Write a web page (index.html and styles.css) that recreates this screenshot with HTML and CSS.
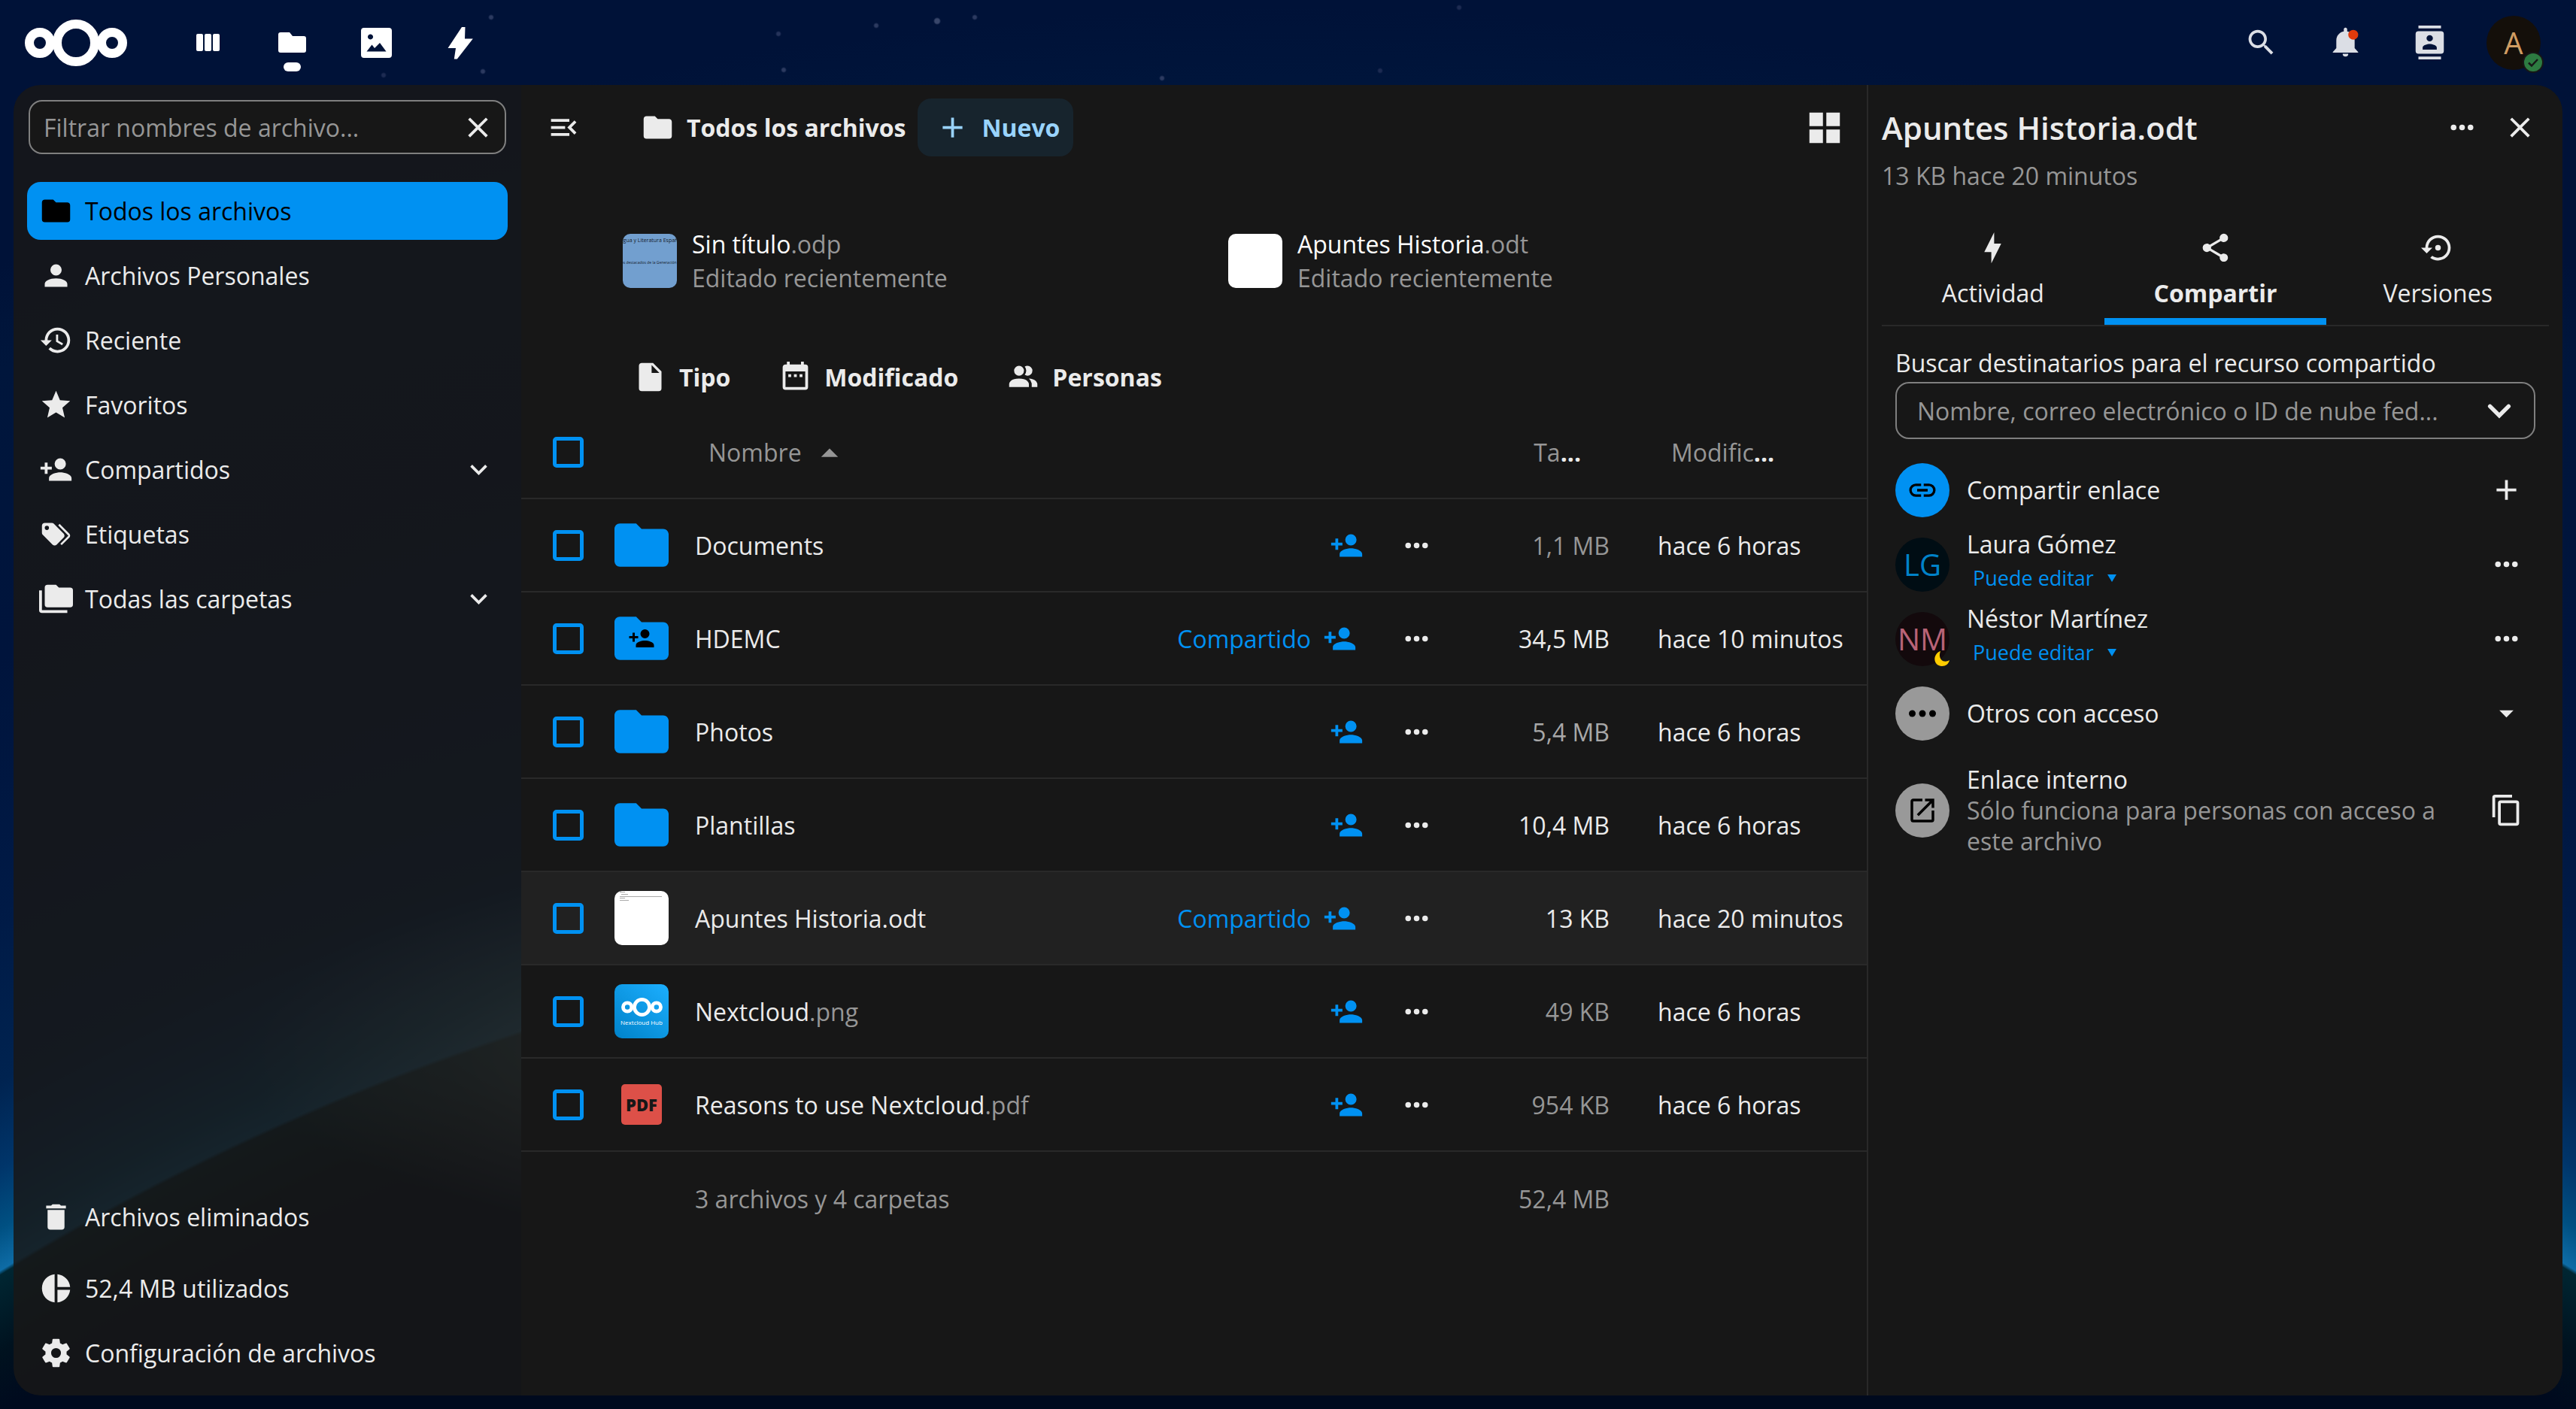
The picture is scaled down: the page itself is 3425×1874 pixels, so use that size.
FILE: index.html
```html
<!DOCTYPE html>
<html lang="es">
<head>
<meta charset="utf-8">
<title>Todos los archivos - Nextcloud</title>
<link rel="stylesheet" href="styles.css">
</head>
<body>
<svg class="sprite" aria-hidden="true">
  <symbol id="logo" viewBox="0 0 136 62"><g fill="none" stroke="currentColor"><circle cx="68" cy="31" r="25" stroke-width="12"/><circle cx="20" cy="31" r="14" stroke-width="12"/><circle cx="116" cy="31" r="14" stroke-width="12"/></g></symbol>
  <symbol id="dashboard" viewBox="0 0 45 45"><rect x="7" y="11" width="9" height="23" rx="2"/><rect x="18" y="11" width="9" height="23" rx="2"/><rect x="29" y="11" width="9" height="23" rx="2"/></symbol>
  <symbol id="files-app" viewBox="0 0 45 45"><path d="M7 9h12l4 5h15a3 3 0 0 1 3 3v16a3 3 0 0 1-3 3H7a3 3 0 0 1-3-3V12a3 3 0 0 1 3-3z"/></symbol>
  <symbol id="photos" viewBox="0 0 45 45"><path fill-rule="evenodd" d="M6 3h33a4 4 0 0 1 4 4v32a4 4 0 0 1-4 4H6a4 4 0 0 1-4-4V7a4 4 0 0 1 4-4zm8.500 8.500a3.500 3.500 0 1 0 .010 0zM9.500 34.500h26L27 23l-7 7-3.500-4.500z"/></symbol>
  <symbol id="bolt-app" viewBox="0 0 45 45"><path d="M24 2h4.500L28 17.500h10.800L17.800 44.500h-4L16 30H5.500z"/></symbol>
  <symbol id="folder" viewBox="0 0 24 24"><path d="M10,4H4C2.890,4 2,4.890 2,6V18A2,2 0 0,0 4,20H20A2,2 0 0,0 22,18V8C22,6.890 21.100,6 20,6H12L10,4Z"/></symbol>
  <symbol id="account" viewBox="0 0 24 24"><path d="M12,4A4,4 0 0,1 16,8A4,4 0 0,1 12,12A4,4 0 0,1 8,8A4,4 0 0,1 12,4M12,14C16.420,14 20,15.790 20,18V20H4V18C4,15.790 7.580,14 12,14Z"/></symbol>
  <symbol id="history" viewBox="0 0 24 24"><path d="M13.500,8H12V13L16.280,15.540L17,14.330L13.500,12.250V8M13,3A9,9 0 0,0 4,12H1L4.960,16.030L9,12H6A7,7 0 0,1 13,5A7,7 0 0,1 20,12A7,7 0 0,1 13,19C11.070,19 9.320,18.210 8.060,16.940L6.640,18.360C8.270,20 10.500,21 13,21A9,9 0 0,0 22,12A9,9 0 0,0 13,3"/></symbol>
  <symbol id="star" viewBox="0 0 24 24"><path d="M12,17.270L18.180,21L16.540,13.970L22,9.240L14.810,8.620L12,2L9.190,8.620L2,9.240L7.450,13.970L5.820,21L12,17.270Z"/></symbol>
  <symbol id="account-plus" viewBox="0 0 24 24"><path d="M15,14C12.330,14 7,15.330 7,18V20H23V18C23,15.330 17.670,14 15,14M6,10V7H4V10H1V12H4V15H6V12H9V10M15,12A4,4 0 0,0 19,8A4,4 0 0,0 15,4A4,4 0 0,0 11,8A4,4 0 0,0 15,12Z"/></symbol>
  <symbol id="tags" viewBox="0 0 24 24"><path d="M5.500,9A1.500,1.500 0 0,0 7,7.500A1.500,1.500 0 0,0 5.500,6A1.500,1.500 0 0,0 4,7.500A1.500,1.500 0 0,0 5.500,9M17.410,11.580C17.770,11.940 18,12.440 18,13C18,13.550 17.780,14.050 17.410,14.410L12.410,19.410C12.050,19.770 11.550,20 11,20C10.450,20 9.950,19.780 9.580,19.410L2.590,12.420C2.220,12.050 2,11.550 2,11V6C2,4.890 2.890,4 4,4H9C9.550,4 10.050,4.220 10.410,4.580L17.410,11.580M13.540,5.710L14.540,4.710L21.410,11.580C21.780,11.940 22,12.450 22,13C22,13.550 21.780,14.050 21.420,14.410L16.040,19.790L15.040,18.790L20.750,13L13.540,5.710Z"/></symbol>
  <symbol id="folders" viewBox="0 0 24 24"><path d="M22,4H14L12,2H6A2,2 0 0,0 4,4V16A2,2 0 0,0 6,18H22A2,2 0 0,0 24,16V6A2,2 0 0,0 22,4M2,6H0V11H0V20A2,2 0 0,0 2,22H20V20H2V6Z"/></symbol>
  <symbol id="trash" viewBox="0 0 24 24"><path d="M19,4H15.500L14.500,3H9.500L8.500,4H5V6H19M6,19A2,2 0 0,0 8,21H16A2,2 0 0,0 18,19V7H6V19Z"/></symbol>
  <symbol id="pie" viewBox="0 0 24 24"><path d="M11,2V22C5.900,21.500 2,17.200 2,12C2,6.800 5.900,2.500 11,2M13,2V11H22C21.500,6.200 17.800,2.500 13,2M13,13V22C17.700,21.500 21.500,17.800 22,13H13Z"/></symbol>
  <symbol id="cog" viewBox="0 0 24 24"><path d="M12,15.500A3.500,3.500 0 0,1 8.500,12A3.500,3.500 0 0,1 12,8.500A3.500,3.500 0 0,1 15.500,12A3.500,3.500 0 0,1 12,15.500M19.430,12.970C19.470,12.650 19.500,12.330 19.500,12C19.500,11.670 19.470,11.340 19.430,11L21.540,9.370C21.730,9.220 21.780,8.950 21.660,8.730L19.660,5.270C19.540,5.050 19.270,4.960 19.050,5.050L16.560,6.050C16.040,5.660 15.500,5.320 14.870,5.070L14.500,2.420C14.460,2.180 14.250,2 14,2H10C9.750,2 9.540,2.180 9.500,2.420L9.130,5.070C8.500,5.320 7.960,5.660 7.440,6.050L4.950,5.050C4.730,4.960 4.460,5.050 4.340,5.270L2.340,8.730C2.210,8.950 2.270,9.220 2.460,9.370L4.570,11C4.530,11.340 4.500,11.670 4.500,12C4.500,12.330 4.530,12.650 4.570,12.970L2.460,14.630C2.270,14.780 2.210,15.050 2.340,15.270L4.340,18.730C4.460,18.950 4.730,19.030 4.950,18.950L7.440,17.940C7.960,18.340 8.500,18.680 9.130,18.930L9.500,21.580C9.540,21.820 9.750,22 10,22H14C14.250,22 14.460,21.820 14.500,21.580L14.870,18.930C15.500,18.670 16.040,18.340 16.560,17.940L19.050,18.950C19.270,19.030 19.540,18.950 19.660,18.730L21.660,15.270C21.780,15.050 21.730,14.780 21.540,14.630L19.430,12.970Z"/></symbol>
  <symbol id="chevron" viewBox="0 0 24 24"><path d="M7.410,8.580L12,13.170L16.590,8.580L18,10L12,16L6,10L7.410,8.580Z"/></symbol>
  <symbol id="chevron-bold" viewBox="0 0 24 24"><path d="M6.500 9.500l5.500 5.500 5.500-5.500" fill="none" stroke="currentColor" stroke-width="2.400" stroke-linecap="round"/></symbol>
  <symbol id="close" viewBox="0 0 24 24"><path d="M19,6.410L17.590,5L12,10.590L6.410,5L5,6.410L10.590,12L5,17.590L6.410,19L12,13.410L17.590,19L19,17.590L13.410,12L19,6.410Z"/></symbol>
  <symbol id="menu-open" viewBox="0 0 24 24"><path d="M21,15.610L19.590,17L14.580,12L19.590,7L21,8.390L17.440,12L21,15.610M3,6H16V8H3V6M3,13V11H13V13H3M3,18V16H16V18H3Z"/></symbol>
  <symbol id="plus" viewBox="0 0 24 24"><path d="M19,13H13V19H11V13H5V11H11V5H13V11H19V13Z"/></symbol>
  <symbol id="grid" viewBox="0 0 24 24"><path d="M3,11H11V3H3M3,21H11V13H3M13,21H21V13H13M13,3V11H21V3"/></symbol>
  <symbol id="file" viewBox="0 0 24 24"><path d="M13,9V3.500L18.500,9M6,2C4.890,2 4,2.890 4,4V20A2,2 0 0,0 6,22H18A2,2 0 0,0 20,20V8L14,2H6Z"/></symbol>
  <symbol id="calendar" viewBox="0 0 24 24"><path d="M9,10H7V12H9V10M13,10H11V12H13V10M17,10H15V12H17V10M19,3H18V1H16V3H8V1H6V3H5C3.890,3 3,3.900 3,5V19A2,2 0 0,0 5,21H19A2,2 0 0,0 21,19V5A2,2 0 0,0 19,3M19,19H5V8H19V19Z"/></symbol>
  <symbol id="people" viewBox="0 0 24 24"><path d="M16 17V19H2V17S2 13 9 13 16 17 16 17M12.500 7.500A3.500 3.500 0 1 0 9 11A3.500 3.500 0 0 0 12.500 7.500M15.940 13A5.320 5.320 0 0 1 18 17V19H22V17S22 13.370 15.940 13M15 4A3.390 3.390 0 0 0 13.070 4.590A5 5 0 0 1 13.070 10.410A3.390 3.390 0 0 0 15 11A3.500 3.500 0 0 0 15 4Z"/></symbol>
  <symbol id="dots" viewBox="0 0 24 24"><circle cx="6" cy="12" r="2"/><circle cx="12" cy="12" r="2"/><circle cx="18" cy="12" r="2"/></symbol>
  <symbol id="search" viewBox="0 0 24 24"><path d="M9.500,3A6.500,6.500 0 0,1 16,9.500C16,11.110 15.410,12.590 14.440,13.730L14.710,14H15.500L20.500,19L19,20.500L14,15.500V14.710L13.730,14.440C12.590,15.410 11.110,16 9.500,16A6.500,6.500 0 0,1 3,9.500A6.500,6.500 0 0,1 9.500,3M9.500,5C7,5 5,7 5,9.500C5,12 7,14 9.500,14C12,14 14,12 14,9.500C14,7 12,5 9.500,5Z"/></symbol>
  <symbol id="bell" viewBox="0 0 24 24"><mask id="bell-cut"><rect width="24" height="24" fill="#fff"/><circle cx="17.500" cy="6.500" r="5" fill="#000"/></mask><path mask="url(#bell-cut)" d="M14,20A2,2 0 0,1 10,20H14M12,1.500A1.200,1.200 0 0,1 13.200,3V4.080C16,4.560 18.500,7.030 18.500,10.500V16L21,18.800V19.200H3V18.800L5.500,16V10.500C5.500,7.030 8,4.560 10.800,4.080V3A1.200,1.200 0 0,1 12,1.500Z"/><circle cx="17.500" cy="6.500" r="3.500" fill="#df3a0c"/></symbol>
  <symbol id="contacts" viewBox="0 0 24 24"><path d="M20,0H4V2H20V0M4,24H20V22H4V24M20,4H4A2,2 0 0,0 2,6V18A2,2 0 0,0 4,20H20A2,2 0 0,0 22,18V6A2,2 0 0,0 20,4M12,6.750A2.250,2.250 0 0,1 14.250,9A2.250,2.250 0 0,1 12,11.250A2.250,2.250 0 0,1 9.750,9A2.250,2.250 0 0,1 12,6.750M17,17H7V15.500C7,13.830 10.330,13 12,13C13.670,13 17,13.830 17,15.500V17Z"/></symbol>
  <symbol id="bolt" viewBox="0 0 24 24"><path d="M11 15H6L13 1V9H18L11 23V15Z"/></symbol>
  <symbol id="share" viewBox="0 0 24 24"><path d="M18,16.080C17.240,16.080 16.560,16.380 16.040,16.850L8.910,12.700C8.960,12.470 9,12.240 9,12C9,11.760 8.960,11.530 8.910,11.300L15.960,7.190C16.500,7.690 17.210,8 18,8A3,3 0 0,0 21,5A3,3 0 0,0 18,2A3,3 0 0,0 15,5C15,5.240 15.040,5.470 15.090,5.700L8.040,9.810C7.500,9.310 6.790,9 6,9A3,3 0 0,0 3,12A3,3 0 0,0 6,15C6.790,15 7.500,14.690 8.040,14.190L15.160,18.340C15.110,18.550 15.080,18.770 15.080,19C15.080,20.610 16.390,21.910 18,21.910C19.610,21.910 20.920,20.610 20.920,19A2.920,2.920 0 0,0 18,16.080Z"/></symbol>
  <symbol id="restore" viewBox="0 0 24 24"><path d="M12,3A9,9 0 0,0 3,12H0L4,16L8,12H5A7,7 0 0,1 12,5A7,7 0 0,1 19,12A7,7 0 0,1 12,19C10.500,19 9.090,18.500 7.940,17.700L6.500,19.140C8.040,20.300 9.940,21 12,21A9,9 0 0,0 21,12A9,9 0 0,0 12,3M14,12A2,2 0 0,0 12,10A2,2 0 0,0 10,12A2,2 0 0,0 12,14A2,2 0 0,0 14,12Z"/></symbol>
  <symbol id="link" viewBox="0 0 24 24"><path d="M3.900,12C3.900,10.290 5.290,8.900 7,8.900H11V7H7A5,5 0 0,0 2,12A5,5 0 0,0 7,17H11V15.100H7C5.290,15.100 3.900,13.710 3.900,12M8,13H16V11H8V13M17,7H13V8.900H17C18.710,8.900 20.100,10.290 20.100,12C20.100,13.710 18.710,15.100 17,15.100H13V17H17A5,5 0 0,0 22,12A5,5 0 0,0 17,7Z"/></symbol>
  <symbol id="open" viewBox="0 0 24 24"><path d="M14,3V5H17.590L7.760,14.830L9.170,16.240L19,6.410V10H21V3M19,19H5V5H12V3H5C3.890,3 3,3.900 3,5V19A2,2 0 0,0 5,21H19A2,2 0 0,0 21,19V12H19V19Z"/></symbol>
  <symbol id="copy" viewBox="0 0 24 24"><path d="M19,21H8V7H19M19,5H8A2,2 0 0,0 6,7V21A2,2 0 0,0 8,23H19A2,2 0 0,0 21,21V7A2,2 0 0,0 19,5M16,1H4A2,2 0 0,0 2,3V17H4V3H16V1Z"/></symbol>
  <symbol id="menu-down" viewBox="0 0 24 24"><path d="M7,10L12,15L17,10H7Z"/></symbol>
  <symbol id="menu-up" viewBox="0 0 24 24"><path d="M7,15L12,10L17,15H7Z"/></symbol>
  <symbol id="triangle" viewBox="0 0 12 12"><path d="M0 1h12L6 11z"/></symbol>
</svg>

<header class="topbar">
  <a class="logo" href="#" aria-label="Nextcloud"><svg><use href="#logo"/></svg></a>
  <nav class="apps" aria-label="Aplicaciones">
    <a href="#" aria-label="Panel"><svg class="icon"><use href="#dashboard"/></svg></a>
    <a href="#" class="current" aria-label="Archivos"><svg class="icon"><use href="#files-app"/></svg></a>
    <a href="#" aria-label="Fotos"><svg class="icon"><use href="#photos"/></svg></a>
    <a href="#" aria-label="Actividad"><svg class="icon"><use href="#bolt-app"/></svg></a>
  </nav>
  <div class="tools">
    <button type="button" aria-label="Buscar"><svg class="icon"><use href="#search"/></svg></button>
    <button type="button" aria-label="Notificaciones"><svg class="icon"><use href="#bell"/></svg></button>
    <button type="button" aria-label="Contactos"><svg class="icon"><use href="#contacts"/></svg></button>
    <button type="button" aria-label="Ajustes de usuario"><span class="avatar avatar-a">A<svg class="status" viewBox="0 0 28 28"><circle cx="14" cy="14" r="14" fill="#171717"/><circle cx="14" cy="14" r="12" fill="#2d7b41"/><path d="M8 14.500l4 4 8-8.500" fill="none" stroke="#171717" stroke-width="2.500"/></svg></span></button>
  </div>
</header>

<div class="panel">
  <nav class="nav" aria-label="Archivos">
    <div class="filter">
      <input type="text" aria-label="Filtrar nombres de archivo" placeholder="Filtrar nombres de archivo...">
      <button type="button" aria-label="Borrar filtro"><svg class="icon"><use href="#close"/></svg></button>
    </div>
    <ul class="nav-list">
      <li class="nav-item active"><a href="#"><svg class="icon"><use href="#folder"/></svg>Todos los archivos</a></li>
      <li class="nav-item"><a href="#"><svg class="icon"><use href="#account"/></svg>Archivos Personales</a></li>
      <li class="nav-item"><a href="#"><svg class="icon"><use href="#history"/></svg>Reciente</a></li>
      <li class="nav-item"><a href="#"><svg class="icon"><use href="#star"/></svg>Favoritos</a></li>
      <li class="nav-item"><a href="#"><svg class="icon"><use href="#account-plus"/></svg>Compartidos</a><button type="button" aria-label="Abrir compartidos"><svg class="icon"><use href="#chevron"/></svg></button></li>
      <li class="nav-item"><a href="#"><svg class="icon"><use href="#tags"/></svg>Etiquetas</a></li>
      <li class="nav-item"><a href="#"><svg class="icon"><use href="#folders"/></svg>Todas las carpetas</a><button type="button" aria-label="Abrir carpetas"><svg class="icon"><use href="#chevron"/></svg></button></li>
    </ul>
    <ul class="nav-list nav-footer">
      <li class="nav-item trash"><a href="#"><svg class="icon"><use href="#trash"/></svg>Archivos eliminados</a></li>
      <li class="nav-item"><a href="#"><svg class="icon"><use href="#pie"/></svg>52,4 MB utilizados</a></li>
      <li class="nav-item"><a href="#"><svg class="icon"><use href="#cog"/></svg>Configuración de archivos</a></li>
    </ul>
  </nav>

  <main class="content">
    <div class="toolbar">
      <button type="button" class="square" aria-label="Cerrar navegación"><svg class="icon"><use href="#menu-open"/></svg></button>
      <a href="#" class="crumb"><svg class="icon"><use href="#folder"/></svg>Todos los archivos</a>
      <button type="button" class="new"><svg class="icon"><use href="#plus"/></svg>Nuevo</button>
      <button type="button" class="square view" aria-label="Vista de cuadrícula"><svg class="icon-lg"><use href="#grid"/></svg></button>
    </div>

    <div class="recent">
      <a href="#" class="recent-item">
        <span class="thumb thumb-odp"><span class="slide-title">Lengua y Literatura Española</span><span class="slide-sub">Autores destacados de la Generación del 27</span></span>
        <span class="recent-text"><span class="name">Sin título<span class="muted">.odp</span></span><span class="muted">Editado recientemente</span></span>
      </a>
      <a href="#" class="recent-item">
        <span class="thumb thumb-blank"></span>
        <span class="recent-text"><span class="name">Apuntes Historia<span class="muted">.odt</span></span><span class="muted">Editado recientemente</span></span>
      </a>
    </div>

    <div class="filters">
      <button type="button"><svg class="icon"><use href="#file"/></svg>Tipo</button>
      <button type="button"><svg class="icon"><use href="#calendar"/></svg>Modificado</button>
      <button type="button"><svg class="icon"><use href="#people"/></svg>Personas</button>
    </div>

    <table class="files">
      <colgroup><col class="c-check"><col class="c-icon"><col><col class="c-actions"><col class="c-size"><col class="c-date"></colgroup>
      <thead>
        <tr>
          <th><input type="checkbox" aria-label="Seleccionar todo"></th>
          <th></th>
          <th class="sort"><button type="button">Nombre<svg class="icon-lg"><use href="#menu-up"/></svg></button></th>
          <th></th>
          <th class="size"><button type="button">Ta<b>...</b></button></th>
          <th class="date"><button type="button">Modific<b>...</b></button></th>
        </tr>
      </thead>
      <tbody>
        <tr>
          <td><input type="checkbox" aria-label="Documents"></td>
          <td><svg class="folder" viewBox="2 4 20 16"><use href="#folder" width="24" height="24"/></svg></td>
          <td><a href="#">Documents</a></td>
          <td><div class="actions"><button type="button" class="share" aria-label="Compartir"><svg class="icon"><use href="#account-plus"/></svg></button><button type="button" class="square" aria-label="Acciones"><svg class="icon"><use href="#dots"/></svg></button></div></td>
          <td class="size muted">1,1 MB</td>
          <td>hace 6 horas</td>
        </tr>
        <tr>
          <td><input type="checkbox" aria-label="HDEMC"></td>
          <td><svg class="folder" viewBox="2 4 20 16"><use href="#folder" width="24" height="24"/><use class="folder-mark" href="#account-plus" x="7" y="7" width="10" height="10"/></svg></td>
          <td><a href="#">HDEMC</a></td>
          <td><div class="actions"><button type="button" class="share shared">Compartido<svg class="icon"><use href="#account-plus"/></svg></button><button type="button" class="square" aria-label="Acciones"><svg class="icon"><use href="#dots"/></svg></button></div></td>
          <td class="size">34,5 MB</td>
          <td>hace 10 minutos</td>
        </tr>
        <tr>
          <td><input type="checkbox" aria-label="Photos"></td>
          <td><svg class="folder" viewBox="2 4 20 16"><use href="#folder" width="24" height="24"/></svg></td>
          <td><a href="#">Photos</a></td>
          <td><div class="actions"><button type="button" class="share" aria-label="Compartir"><svg class="icon"><use href="#account-plus"/></svg></button><button type="button" class="square" aria-label="Acciones"><svg class="icon"><use href="#dots"/></svg></button></div></td>
          <td class="size mid">5,4 MB</td>
          <td>hace 6 horas</td>
        </tr>
        <tr>
          <td><input type="checkbox" aria-label="Plantillas"></td>
          <td><svg class="folder" viewBox="2 4 20 16"><use href="#folder" width="24" height="24"/></svg></td>
          <td><a href="#">Plantillas</a></td>
          <td><div class="actions"><button type="button" class="share" aria-label="Compartir"><svg class="icon"><use href="#account-plus"/></svg></button><button type="button" class="square" aria-label="Acciones"><svg class="icon"><use href="#dots"/></svg></button></div></td>
          <td class="size">10,4 MB</td>
          <td>hace 6 horas</td>
        </tr>
        <tr class="selected">
          <td><input type="checkbox" aria-label="Apuntes Historia.odt"></td>
          <td><svg class="thumb" viewBox="0 0 72 72"><rect width="72" height="72" fill="#fff"/><g fill="#aaa"><rect x="7" y="1" width="7" height="1"/><rect x="9" y="4" width="9" height="1"/><rect x="7" y="7" width="56" height="1"/><rect x="7" y="9" width="7" height="1"/><rect x="7" y="12" width="12" height="1"/></g></svg></td>
          <td><a href="#">Apuntes Historia.odt</a></td>
          <td><div class="actions"><button type="button" class="share shared">Compartido<svg class="icon"><use href="#account-plus"/></svg></button><button type="button" class="square" aria-label="Acciones"><svg class="icon"><use href="#dots"/></svg></button></div></td>
          <td class="size">13 KB</td>
          <td>hace 20 minutos</td>
        </tr>
        <tr>
          <td><input type="checkbox" aria-label="Nextcloud.png"></td>
          <td><span class="thumb thumb-png"><svg><use href="#logo"/></svg>Nextcloud Hub</span></td>
          <td><a href="#">Nextcloud<span class="muted">.png</span></a></td>
          <td><div class="actions"><button type="button" class="share" aria-label="Compartir"><svg class="icon"><use href="#account-plus"/></svg></button><button type="button" class="square" aria-label="Acciones"><svg class="icon"><use href="#dots"/></svg></button></div></td>
          <td class="size muted">49 KB</td>
          <td>hace 6 horas</td>
        </tr>
        <tr>
          <td><input type="checkbox" aria-label="Reasons to use Nextcloud.pdf"></td>
          <td><span class="pdf">PDF</span></td>
          <td><a href="#">Reasons to use Nextcloud<span class="muted">.pdf</span></a></td>
          <td><div class="actions"><button type="button" class="share" aria-label="Compartir"><svg class="icon"><use href="#account-plus"/></svg></button><button type="button" class="square" aria-label="Acciones"><svg class="icon"><use href="#dots"/></svg></button></div></td>
          <td class="size muted">954 KB</td>
          <td>hace 6 horas</td>
        </tr>
      </tbody>
      <tfoot>
        <tr><td></td><td></td><td class="muted">3 archivos y 4 carpetas</td><td></td><td class="size muted">52,4 MB</td><td></td></tr>
      </tfoot>
    </table>
  </main>

  <aside class="sidebar">
    <div class="side-head">
      <h2>Apuntes Historia.odt</h2>
      <button type="button" class="square" aria-label="Acciones"><svg class="icon"><use href="#dots"/></svg></button>
      <button type="button" class="square" aria-label="Cerrar"><svg class="icon"><use href="#close"/></svg></button>
    </div>
    <p class="side-sub muted">13 KB hace 20 minutos</p>
    <div class="tabs" role="tablist">
      <button type="button" role="tab"><svg class="icon"><use href="#bolt"/></svg>Actividad</button>
      <button type="button" role="tab" aria-selected="true" class="current"><svg class="icon"><use href="#share"/></svg>Compartir</button>
      <button type="button" role="tab"><svg class="icon"><use href="#restore"/></svg>Versiones</button>
    </div>
    <div class="sharing">
      <label for="recipients">Buscar destinatarios para el recurso compartido</label>
      <div class="combo">
        <input id="recipients" type="text" placeholder="Nombre, correo electrónico o ID de nube fed...">
        <button type="button" aria-label="Abrir lista"><svg class="icon-lg"><use href="#chevron-bold"/></svg></button>
      </div>
      <ul class="shares">
        <li>
          <span class="avatar avatar-link"><svg class="icon-md"><use href="#link"/></svg></span>
          <span class="entry">Compartir enlace</span>
          <button type="button" class="square" aria-label="Crear enlace"><svg class="icon"><use href="#plus"/></svg></button>
        </li>
        <li>
          <span class="avatar avatar-lg">LG</span>
          <span class="entry">Laura Gómez<button type="button" class="perm">Puede editar<svg><use href="#triangle"/></svg></button></span>
          <button type="button" class="square" aria-label="Acciones"><svg class="icon"><use href="#dots"/></svg></button>
        </li>
        <li>
          <span class="avatar avatar-nm">NM<svg class="moon" viewBox="0 0 20 20"><path fill="#fc0" d="M8 0C-3 4-2 20 10 20C15 20 19 17 20 12C12 17 4 10 8 0z"/></svg></span>
          <span class="entry">Néstor Martínez<button type="button" class="perm">Puede editar<svg><use href="#triangle"/></svg></button></span>
          <button type="button" class="square" aria-label="Acciones"><svg class="icon"><use href="#dots"/></svg></button>
        </li>
        <li>
          <span class="avatar avatar-grey"><svg class="icon-lg"><use href="#dots"/></svg></span>
          <span class="entry">Otros con acceso</span>
          <button type="button" class="square" aria-label="Mostrar otros"><svg class="icon"><use href="#menu-down"/></svg></button>
        </li>
        <li class="internal">
          <span class="avatar avatar-grey"><svg class="icon-md"><use href="#open"/></svg></span>
          <span class="entry">Enlace interno<span class="muted">Sólo funciona para personas con acceso a este archivo</span></span>
          <button type="button" class="square" aria-label="Copiar enlace"><svg class="icon"><use href="#copy"/></svg></button>
        </li>
      </ul>
    </div>
  </aside>
</div>
</body>
</html>
```
FILE: styles.css
```css
:root {
  --text: #ebebeb;
  --muted: #969696;
  --primary: #0091f2;
  --main: #171717;
  --line: #292929;
}

* {
  box-sizing: border-box;
}

body {
  margin: 0;
  min-height: 100vh;
  display: flex;
  flex-direction: column;
  padding: 0 18px 18px;
  color: var(--text);
  font: 32px/45px "Open Sans", "Noto Sans", sans-serif;
  background:
    radial-gradient(circle at 1246px 28px, #38466a 3px, transparent 5px),
    radial-gradient(circle at 1296px 23px, #2c3a60 2px, transparent 4px),
    radial-gradient(circle at 1165px 34px, #2c3a60 2px, transparent 4px),
    radial-gradient(circle at 1035px 45px, #25335a 2px, transparent 4px),
    radial-gradient(circle at 1042px 93px, #2c3a60 2px, transparent 4px),
    radial-gradient(circle at 1545px 104px, #2c3a60 2px, transparent 4px),
    radial-gradient(circle at 1835px 94px, #1d2b52 2px, transparent 4px),
    radial-gradient(circle at 1940px 10px, #1d2b52 2px, transparent 4px),
    radial-gradient(circle at 653px 23px, #2c3a60 2px, transparent 4px),
    radial-gradient(circle at 642px 95px, #2c3a60 2px, transparent 4px),
    radial-gradient(circle at 510px 100px, #1d2b52 2px, transparent 4px),
    radial-gradient(1400px 320px at 50% 1400px, rgba(190, 215, 205, 0.6) 60%, rgba(190, 215, 205, 0.25) 80%, transparent),
    radial-gradient(circle at 50% 4490px, #000a1e 3120px, #00121f 3190px, #002632 3277px, #0e6ca6 3282px, #005082 3330px, #00356a 3400px, #002350 3500px, #001a46 3700px, #00143c 4000px, #00163c 4350px, #001238 4480px);
}

.sprite {
  display: none;
}

svg {
  display: block;
  flex: none;
  fill: currentColor;
}

a {
  color: inherit;
  text-decoration: none;
}

ul {
  list-style: none;
  margin: 0;
  padding: 0;
}

button {
  display: flex;
  align-items: center;
  margin: 0;
  padding: 0;
  border: 0;
  background: none;
  color: inherit;
  font: inherit;
}

input {
  margin: 0;
  font: inherit;
  color: inherit;
}

input::placeholder {
  color: var(--muted);
  opacity: 1;
}

.icon {
  width: 45px;
  height: 45px;
}

.icon-md {
  width: 42px;
  height: 42px;
}

.icon-lg {
  width: 54px;
  height: 54px;
}

.muted {
  color: var(--muted);
}

.square {
  flex: none;
  width: 77px;
  height: 77px;
  justify-content: center;
}

/* Top bar */
.topbar {
  display: flex;
  align-items: center;
  height: 113px;
  padding: 0 9px 0 15px;
  color: #fff;
}

.logo svg {
  width: 136px;
  height: 62px;
}

.apps {
  display: flex;
  margin-left: 51px;
}

.apps a {
  position: relative;
  display: flex;
  align-items: center;
  justify-content: center;
  width: 112px;
  height: 112px;
}

.apps .current::after {
  content: "";
  position: absolute;
  bottom: 18px;
  width: 23px;
  height: 12px;
  border-radius: 6px;
  background: #fff;
}

.tools {
  display: flex;
  margin-left: auto;
}

.tools button {
  justify-content: center;
  width: 112px;
  height: 112px;
  color: #dbdee5;
}

.avatar {
  position: relative;
  flex: none;
  display: flex;
  align-items: center;
  justify-content: center;
  width: 72px;
  height: 72px;
  border-radius: 50%;
  font-size: 40px;
}

.avatar-a {
  background: #140f0a;
  color: #d09c62;
}

.status {
  position: absolute;
  right: -4px;
  bottom: -4px;
  width: 28px;
  height: 28px;
}

/* Panel */
.panel {
  flex: 1;
  display: flex;
  overflow: hidden;
  border-radius: 36px;
}

/* Navigation */
.nav {
  flex: none;
  display: flex;
  flex-direction: column;
  width: 675px;
  padding: 20px 18px 18px;
  background: rgba(23, 23, 23, 0.86);
}

.filter {
  display: flex;
  align-items: center;
  height: 72px;
  margin: 0 2px 37px;
  border: 2px solid #7f7f7f;
  border-radius: 18px;
  background: var(--main);
}

.filter input {
  flex: 1;
  min-width: 0;
  padding: 0 0 0 18px;
  border: 0;
  background: none;
}

.filter button {
  justify-content: center;
  width: 72px;
}

.nav-list {
  display: flex;
  flex-direction: column;
  gap: 9px;
}

.nav-item {
  display: flex;
  height: 77px;
  border-radius: 18px;
}

.nav-item a {
  flex: 1;
  display: flex;
  align-items: center;
  gap: 16px;
  padding-left: 16px;
}

.nav-item button {
  justify-content: center;
  width: 77px;
}

.nav-item.active {
  background: var(--primary);
  color: #000;
}

.nav-footer {
  margin-top: auto;
}

.nav-item.trash {
  margin-bottom: 9px;
}

/* Content */
.content {
  flex: 1;
  min-width: 0;
  background: var(--main);
}

.toolbar {
  display: flex;
  align-items: center;
  padding: 18px 18px 0;
}

.crumb {
  display: flex;
  align-items: center;
  gap: 16px;
  margin: 0 16px 0 64px;
  font-weight: 700;
}

.new {
  gap: 16px;
  height: 77px;
  padding: 0 18px 0 24px;
  border-radius: 18px;
  background: #17242d;
  color: #99d3fb;
  font-weight: 700;
}

.view {
  margin-left: auto;
}

.recent {
  display: grid;
  grid-template-columns: 1fr 1fr;
  padding: 94px 44px 0 135px;
}

.recent-item {
  display: flex;
  align-items: center;
  gap: 20px;
}

.recent-text {
  display: flex;
  flex-direction: column;
}

.name {
  color: #fff;
}

.thumb {
  display: block;
  flex: none;
  width: 72px;
  height: 72px;
  border-radius: 10px;
  overflow: hidden;
}

.thumb-blank {
  background: #fff;
}

.thumb-odp {
  display: flex;
  flex-direction: column;
  align-items: center;
  gap: 17px;
  padding-top: 3px;
  background: #729fcf;
  color: #16202b;
  font-size: 7px;
  line-height: 12px;
  white-space: nowrap;
}

.slide-sub {
  font-size: 5px;
}

.filters {
  display: flex;
  gap: 64px;
  padding: 71px 0 0 149px;
}

.filters button {
  gap: 16px;
  height: 77px;
  font-weight: 700;
}

/* File table */
.files {
  width: 100%;
  table-layout: fixed;
  border-spacing: 0;
}

.c-check {
  width: 124px;
}

.c-icon {
  width: 107px;
}

.c-actions {
  width: 400px;
}

.c-size {
  width: 282px;
}

.c-date {
  width: 278px;
}

.files th,
.files td {
  height: 124px;
  padding: 0;
  border-bottom: 2px solid var(--line);
  text-align: left;
  font-weight: 400;
  white-space: nowrap;
}

.files th {
  color: var(--muted);
}

.files b {
  color: var(--text);
}

.files input {
  appearance: none;
  display: block;
  width: 41px;
  height: 41px;
  margin: 0 auto;
  border: 5px solid var(--primary);
  border-radius: 5px;
}

.files .sort button {
  gap: 10px;
  padding-left: 18px;
}

.files .size {
  padding-right: 64px;
  text-align: right;
}

.files th.size {
  padding-right: 102px;
}

.files .size button {
  margin-left: auto;
}

.files .date {
  padding-left: 18px;
}

.files .mid {
  color: #a8a8a8;
}

.files .selected td {
  background: #212121;
}

.files tfoot td {
  border: 0;
}

.folder {
  width: 72px;
  height: 58px;
  color: var(--primary);
}

.folder-mark {
  color: #000;
}

.thumb-png {
  display: flex;
  flex-direction: column;
  align-items: center;
  gap: 2px;
  padding-top: 18px;
  background: linear-gradient(40deg, #0082c9, #1cafff);
  color: #fff;
  font-size: 8px;
  line-height: 12px;
}

.thumb-png svg {
  width: 55px;
  height: 25px;
}

.pdf {
  display: flex;
  align-items: center;
  justify-content: center;
  width: 54px;
  height: 54px;
  margin-left: 9px;
  border-radius: 5px;
  background: #dd5048;
  color: var(--main);
  font-size: 22px;
  font-weight: 800;
}

.actions {
  display: flex;
  align-items: center;
  justify-content: flex-end;
  gap: 16px;
}

.share {
  gap: 16px;
  padding: 0 16px;
  color: var(--primary);
}

.shared {
  padding-right: 25px;
}

/* Details sidebar */
.sidebar {
  flex: none;
  width: 925px;
  padding: 18px 18px 0;
  border-left: 2px solid var(--line);
  background: var(--main);
}

.side-head {
  display: flex;
  align-items: center;
}

.side-head h2 {
  flex: 1;
  margin: 0;
  font-size: 42px;
  font-weight: 600;
}

.side-sub {
  margin: 3px 0 51px;
}

.tabs {
  display: flex;
  border-bottom: 2px solid var(--line);
}

.tabs button {
  flex: 1;
  flex-direction: column;
  gap: 15px;
  padding-bottom: 11px;
  border-bottom: 9px solid transparent;
}

.tabs .current {
  border-color: var(--primary);
  font-weight: 700;
}

.sharing {
  padding: 26px 18px 0;
}

.sharing label {
  display: block;
}

.combo {
  display: flex;
  align-items: center;
  height: 76px;
  margin: 3px 0 18px;
  border: 2px solid #7f7f7f;
  border-radius: 18px;
}

.combo input {
  flex: 1;
  min-width: 0;
  padding: 0 0 0 27px;
  border: 0;
  background: none;
}

.combo button {
  justify-content: center;
  width: 92px;
}

.shares li {
  display: flex;
  align-items: center;
  gap: 23px;
  min-height: 99px;
}

.entry {
  flex: 1;
  display: flex;
  flex-direction: column;
  align-items: flex-start;
}

.perm {
  gap: 18px;
  height: 45px;
  margin-bottom: 9px;
  padding-left: 8px;
  color: var(--primary);
  font-size: 27px;
}

.perm svg {
  width: 12px;
  height: 12px;
}

.shares .internal {
  margin-top: 18px;
  line-height: 41px;
}

.avatar-link {
  background: var(--primary);
  color: #000;
}

.avatar-lg {
  background: #000d14;
  color: #0082c9;
}

.avatar-nm {
  background: #13090c;
  color: #b96377;
}

.avatar-grey {
  background: #999;
  color: #000;
}

.moon {
  position: absolute;
  right: 0;
  bottom: 0;
  width: 20px;
  height: 20px;
}
```
